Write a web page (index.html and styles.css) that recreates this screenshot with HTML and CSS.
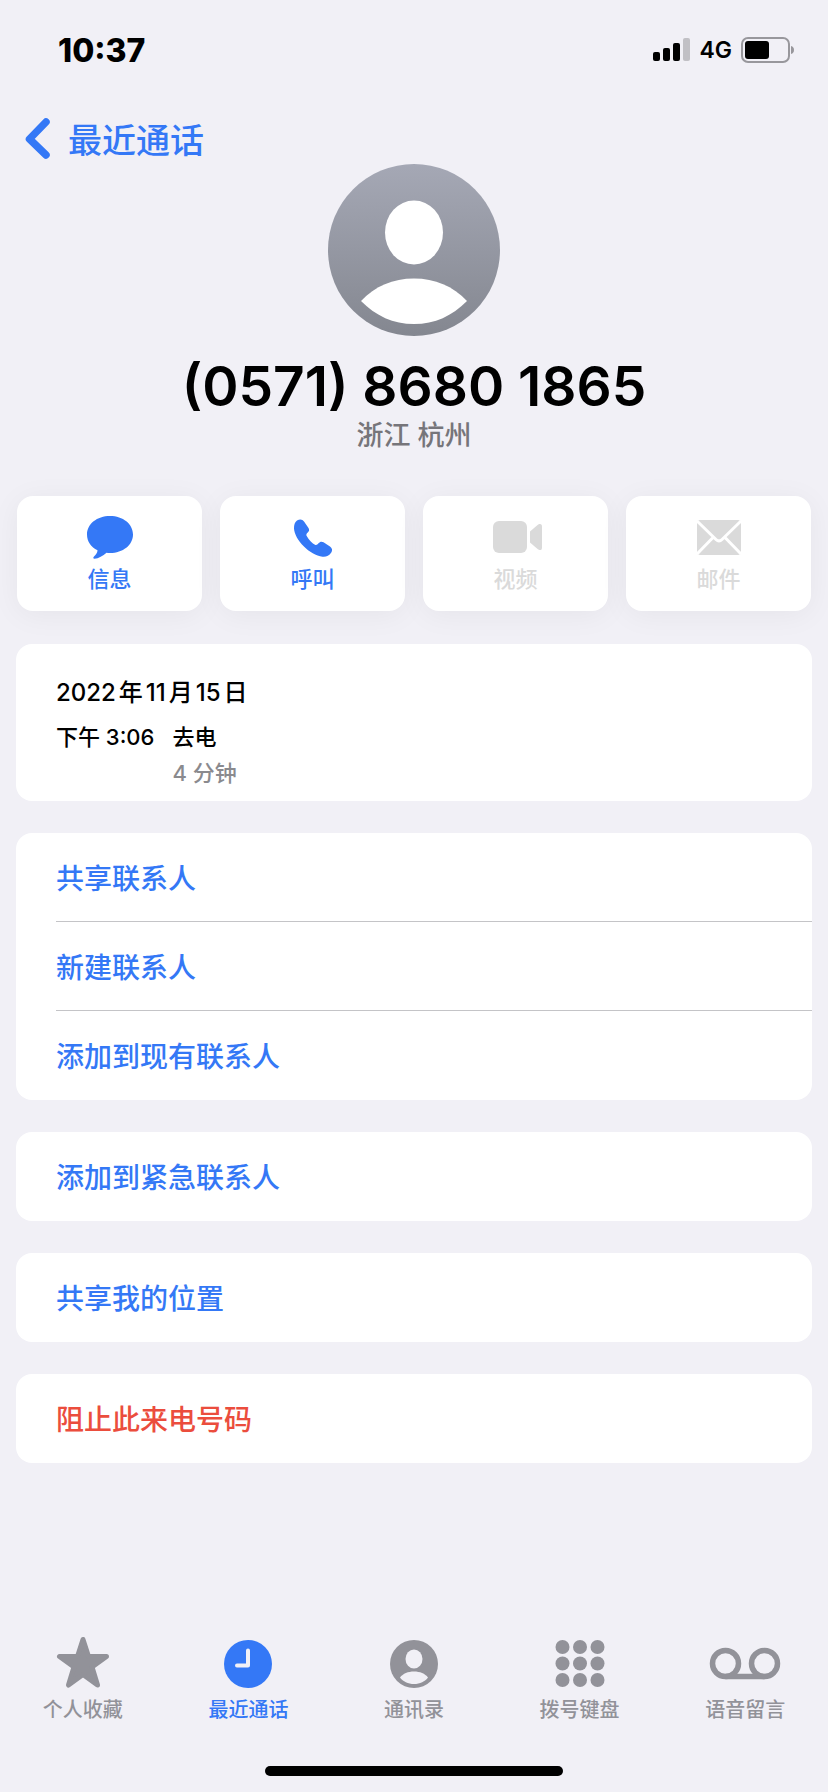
FILE: index.html
```html
<!DOCTYPE html>
<html lang="zh-CN">
<head>
    <meta charset="UTF-8">
    <meta name="viewport" content="width=device-width, initial-scale=1.0">
    <title>最近通话</title>
    <link rel="stylesheet" href="styles.css">
</head>
<body>
    <div class="status-bar">
        <span class="time">10:37</span>
        <div class="status-icons">
            <svg class="signal" viewBox="0 0 37 24" width="37" height="24">
                <rect x="0" y="14" width="7" height="9" rx="2"/>
                <rect x="10" y="10" width="7" height="13" rx="2"/>
                <rect x="20" y="5" width="7" height="18" rx="2"/>
                <rect x="30" y="0" width="7" height="23" rx="2" fill="#c1c0c5"/>
            </svg>
            <span class="network">4G</span>
            <svg class="battery" viewBox="0 0 54 26" width="54" height="26">
                <rect x="1" y="1" width="47" height="24" rx="6" fill="none" stroke="#98979c" stroke-width="2"/>
                <rect x="4" y="4" width="24" height="18" rx="3"/>
                <path d="M50 9c2 .6 3 2 3 4s-1 3.400-3 4z" fill="#98979c"/>
            </svg>
        </div>
    </div>

    <header class="nav">
        <a class="back" href="#">
            <svg viewBox="0 0 26 42" width="26" height="42">
                <path d="M22 5L5.500 22l16.500 16" fill="none" stroke="currentColor" stroke-width="7.500" stroke-linecap="round" stroke-linejoin="round"/>
            </svg>
            最近通话
        </a>
    </header>

    <main>
        <section class="profile">
            <svg class="avatar" viewBox="0 0 172 172" width="172" height="172">
                <defs>
                    <linearGradient id="avatarFill" x1="0" y1="0" x2="0" y2="1">
                        <stop offset="0" stop-color="#a5a8b5"/>
                        <stop offset="1" stop-color="#848790"/>
                    </linearGradient>
                </defs>
                <circle cx="86" cy="86" r="86" fill="url(#avatarFill)"/>
                <ellipse cx="86" cy="68.500" rx="29" ry="32" fill="#fff"/>
                <path d="M33 137C47 122 65 114.500 86 114.500S125 122 139 137C124 152 107 160 86 160S48 152 33 137z" fill="#fff"/>
            </svg>
            <h1 class="number">(0571) 8680 1865</h1>
            <p class="location">浙江 杭州</p>
        </section>

        <div class="actions">
            <button class="action" type="button">
                <svg viewBox="0 0 48 44" width="48" height="44">
                    <path d="M24 1C37 1 47 9 47 19.500S37 38 24 38C22.500 38 21.500 38 20.500 37.800C17 41 12.500 43.500 8.500 43.800C7 43.800 7 42.500 8 41.500C10 39.500 11.500 37.500 11.500 35.200C5 32 1 26.500 1 19.500C1 9 11 1 24 1z" fill="currentColor"/>
                </svg>
                信息
            </button>
            <button class="action" type="button">
                <svg viewBox="0 0 48 44" width="48" height="44">
                    <path d="M8 5.500C11 3.700 13.500 4.300 15 6.500L19.500 13C20.500 14.800 20.300 16 19 17.200C17.300 18.700 17 19.800 17.700 21C20 25.500 23.500 28.500 26 29.700C27.300 30.300 28.300 29.800 29.500 28.300C31 26.500 32.700 26.200 34.500 27.300L41 31.500C43.500 33.300 43.500 35.500 42.300 37.500C40 41.200 37 42 33.500 41.700C21 40.500 5.500 24.500 5 13.500C5 10 5.700 7 8 5.500z" fill="currentColor"/>
                </svg>
                呼叫
            </button>
            <button class="action" type="button" disabled>
                <svg viewBox="0 0 50 44" width="50" height="44">
                    <rect x="2" y="6" width="34" height="32" rx="6" fill="currentColor"/>
                    <path d="M39 16.500L46 10.500C49 8 51 9 51 11.500V32.500C51 35.500 49 36 46 33.500L39 27.500z" fill="currentColor"/>
                </svg>
                视频
            </button>
            <button class="action" type="button" disabled>
                <svg viewBox="0 0 46 44" width="46" height="44">
                    <rect x="1" y="5" width="44" height="35" rx="3" fill="currentColor"/>
                    <path d="M1 6L20 24.500Q23 27.300 26 24.500L45 6M1 39L17.500 22M45 39L28.500 22" fill="none" stroke="#fff" stroke-width="3"/>
                </svg>
                邮件
            </button>
        </div>

        <section class="card history">
            <h2 class="date">2022年11月15日</h2>
            <div class="call">
                <span>下午 3:06</span>
                <div>
                    <div>去电</div>
                    <div class="duration">4 分钟</div>
                </div>
            </div>
        </section>

        <div class="card">
            <button class="row" type="button">共享联系人</button>
            <button class="row" type="button">新建联系人</button>
            <button class="row" type="button">添加到现有联系人</button>
        </div>
        <div class="card">
            <button class="row" type="button">添加到紧急联系人</button>
        </div>
        <div class="card">
            <button class="row" type="button">共享我的位置</button>
        </div>
        <div class="card">
            <button class="row danger" type="button">阻止此来电号码</button>
        </div>
    </main>

    <nav class="tabs">
        <a class="tab" href="#">
            <svg viewBox="0 0 54 52" width="54" height="52">
                <path d="M27 2.500L32.500 19.500H50.500L36 30L41.500 48L27 37.500L12.500 48L18 30L3.500 19.500H21.500z" fill="currentColor" stroke="currentColor" stroke-width="5" stroke-linejoin="round"/>
            </svg>
            个人收藏
        </a>
        <a class="tab active" href="#">
            <svg viewBox="0 0 48 52" width="48" height="52">
                <circle cx="24" cy="27" r="24" fill="currentColor"/>
                <path d="M24 13.500V28.500H13" fill="none" stroke="#f1f0f6" stroke-width="4" stroke-linecap="round" stroke-linejoin="round"/>
            </svg>
            最近通话
        </a>
        <a class="tab" href="#">
            <svg viewBox="0 0 48 52" width="48" height="52">
                <circle cx="24" cy="27" r="24" fill="currentColor"/>
                <ellipse cx="24" cy="22" rx="8.500" ry="9.500" fill="#f1f0f6"/>
                <path d="M10 40.500C13 36.500 18 34.500 24 34.500S35 36.500 38 40.500C35 44.500 30 47 24 47S13 44.500 10 40.500z" fill="#f1f0f6"/>
            </svg>
            通讯录
        </a>
        <a class="tab" href="#">
            <svg viewBox="0 0 50 52" width="50" height="52" fill="currentColor">
                <circle cx="7.500" cy="10" r="7"/>
                <circle cx="25" cy="10" r="7"/>
                <circle cx="42.500" cy="10" r="7"/>
                <circle cx="7.500" cy="26.500" r="7"/>
                <circle cx="25" cy="26.500" r="7"/>
                <circle cx="42.500" cy="26.500" r="7"/>
                <circle cx="7.500" cy="43" r="7"/>
                <circle cx="25" cy="43" r="7"/>
                <circle cx="42.500" cy="43" r="7"/>
            </svg>
            拨号键盘
        </a>
        <a class="tab" href="#">
            <svg viewBox="0 0 72 52" width="72" height="52" fill="none" stroke="currentColor" stroke-width="5.500">
                <circle cx="16.500" cy="26.500" r="13"/>
                <circle cx="55.500" cy="26.500" r="13"/>
                <path d="M16.500 39.500H55.500"/>
            </svg>
            语音留言
        </a>
    </nav>
    <div class="home-indicator"></div>
</body>
</html>
```

FILE: styles.css
```css
* {
    box-sizing: border-box;
}

body {
    display: flex;
    flex-direction: column;
    min-height: 100vh;
    margin: 0;
    background-color: #f1f0f6;
    color: #000;
    font-family: Inter, "Noto Sans CJK SC", sans-serif;
    font-weight: 500;
    text-autospace: normal;
}

h1,
h2,
p {
    margin: 0;
}

button {
    border: none;
    font: inherit;
    cursor: pointer;
}

a {
    text-decoration: none;
}

svg {
    flex-shrink: 0;
    overflow: visible;
}

.status-bar {
    display: flex;
    align-items: center;
    justify-content: space-between;
    height: 100px;
    padding: 0 33px 0 58px;
}

.time {
    font-size: 32px;
    font-weight: 800;
}

.status-icons {
    display: flex;
    align-items: center;
    gap: 9px;
}

.network {
    font-size: 23px;
    font-weight: 600;
}

.nav {
    padding: 14px 24px 0;
}

.back {
    display: inline-flex;
    align-items: center;
    gap: 18px;
    height: 50px;
    padding-bottom: 2px;
    color: #3478f6;
    font-size: 34px;
    vertical-align: top;
}

main {
    padding: 0 16px;
}

.profile {
    display: flex;
    flex-direction: column;
    align-items: center;
}

.number {
    margin-top: 19px;
    font-size: 55px;
    font-weight: 600;
    line-height: 62px;
}

.location {
    color: #76757a;
    font-size: 27px;
    line-height: 38px;
}

.actions {
    display: grid;
    grid-template-columns: repeat(4, 1fr);
    gap: 18px;
    margin: 41px 1px 33px;
}

.action {
    display: flex;
    flex-direction: column;
    align-items: center;
    gap: 4px;
    padding: 19px 0 16px;
    border-radius: 16px;
    background-color: #fff;
    box-shadow: 0 4px 30px rgba(0, 0, 0, 0.05);
    color: #3478f6;
    font-size: 22px;
    line-height: 32px;
}

.action:disabled {
    color: #dadada;
    cursor: default;
}

.card {
    margin-bottom: 32px;
    border-radius: 16px;
    background-color: #fff;
    overflow: hidden;
}

.history {
    padding: 31px 40px 10px;
    font-size: 22px;
    line-height: 36px;
}

.date {
    margin-bottom: 8px;
    font-size: 24px;
    font-weight: 500;
}

.call {
    display: flex;
    gap: 18px;
}

.duration {
    color: #8a8a8e;
}

.row {
    display: block;
    position: relative;
    width: 100%;
    height: 89px;
    padding: 0 40px 2px;
    background: none;
    color: #3478f6;
    font-size: 28px;
    text-align: left;
}

/* divider starts at the text and runs to the card edge */
.row + .row::before {
    content: "";
    position: absolute;
    top: -1px;
    left: 40px;
    right: 0;
    height: 1px;
    background-color: #c4c4c7;
}

.danger {
    color: #eb4d3d;
}

.tabs {
    display: grid;
    grid-template-columns: repeat(5, 1fr);
    margin-top: auto;
    padding-bottom: 42px;
}

.tab {
    display: flex;
    flex-direction: column;
    align-items: center;
    gap: 7px;
    color: #929299;
    font-size: 20px;
    line-height: 28px;
}

.active {
    color: #3478f6;
}

.home-indicator {
    width: 36%;
    height: 10px;
    margin: 0 auto 16px;
    border-radius: 5px;
    background-color: #000;
}
```
